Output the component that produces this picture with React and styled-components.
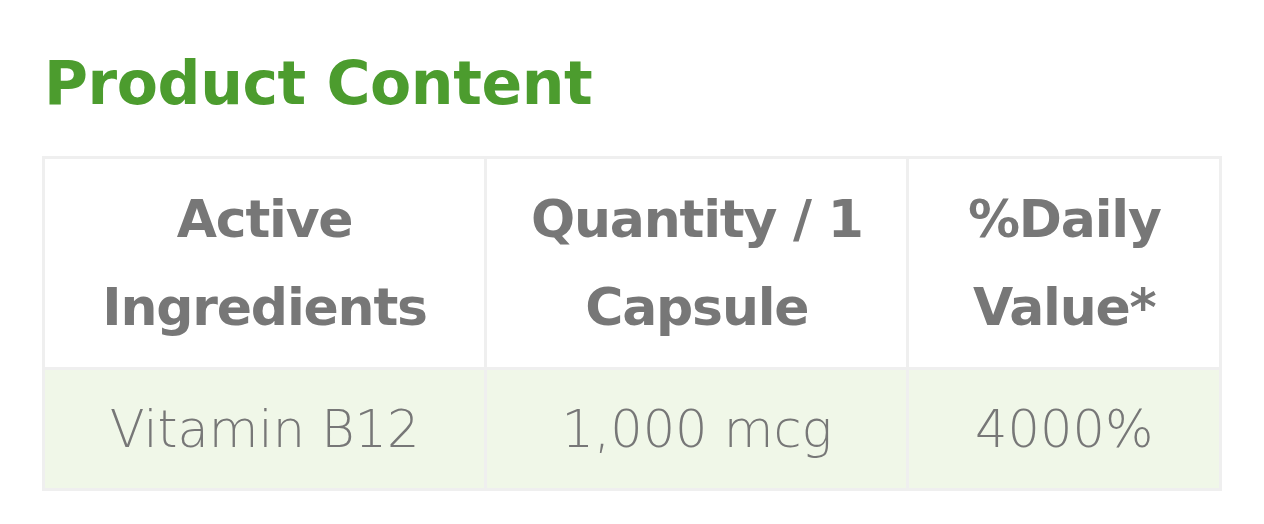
import React from 'react';
import styled, { createGlobalStyle } from 'styled-components';

const GlobalStyle = createGlobalStyle`
  body {
    margin: 0;
    background: #ffffff;
    font-family: 'DejaVu Sans', 'Liberation Sans', sans-serif;
  }
`;

const Page = styled.div`
  padding: 48px 42px 0 42px;
`;

const Title = styled.h2`
  margin: 0 0 38px 2px;
  font-size: 60px;
  line-height: 70px;
  font-weight: 700;
  letter-spacing: -0.4px;
  color: #4c9c2e;
`;

const Table = styled.table`
  width: 1180px;
  border-collapse: collapse;
  table-layout: fixed;
  border: 3px solid #efefef;
`;

const HeadCell = styled.th`
  width: ${({ w }) => w};
  height: 208px;
  padding: 0;
  border: 3px solid #efefef;
  background: #ffffff;
  color: #777777;
  font-size: 52px;
  line-height: 88px;
  font-weight: 700;
  letter-spacing: -1.2px;
  text-align: center;
  vertical-align: middle;
`;

const BodyCell = styled.td`
  height: 118px;
  padding: 0;
  border: 3px solid #efefef;
  background: #f0f7e8;
  color: #777777;
  font-size: 51px;
  font-weight: 300;
  text-align: center;
  vertical-align: middle;
`;

const columns = [
  { label: 'Active Ingredients', width: '37.6%', value: 'Vitamin B12' },
  { label: 'Quantity / 1 Capsule', width: '35.9%', value: '1,000 mcg' },
  { label: '%Daily Value*', width: '26.5%', value: '4000%' },
];

const App = () => (
  <>
    <GlobalStyle />
    <Page>
      <Title>Product Content</Title>
      <Table>
        <thead>
          <tr>
            {columns.map((c) => (
              <HeadCell key={c.label} w={c.width}>
                {c.label}
              </HeadCell>
            ))}
          </tr>
        </thead>
        <tbody>
          <tr>
            {columns.map((c) => (
              <BodyCell key={c.value}>{c.value}</BodyCell>
            ))}
          </tr>
        </tbody>
      </Table>
    </Page>
  </>
);

export default App;
